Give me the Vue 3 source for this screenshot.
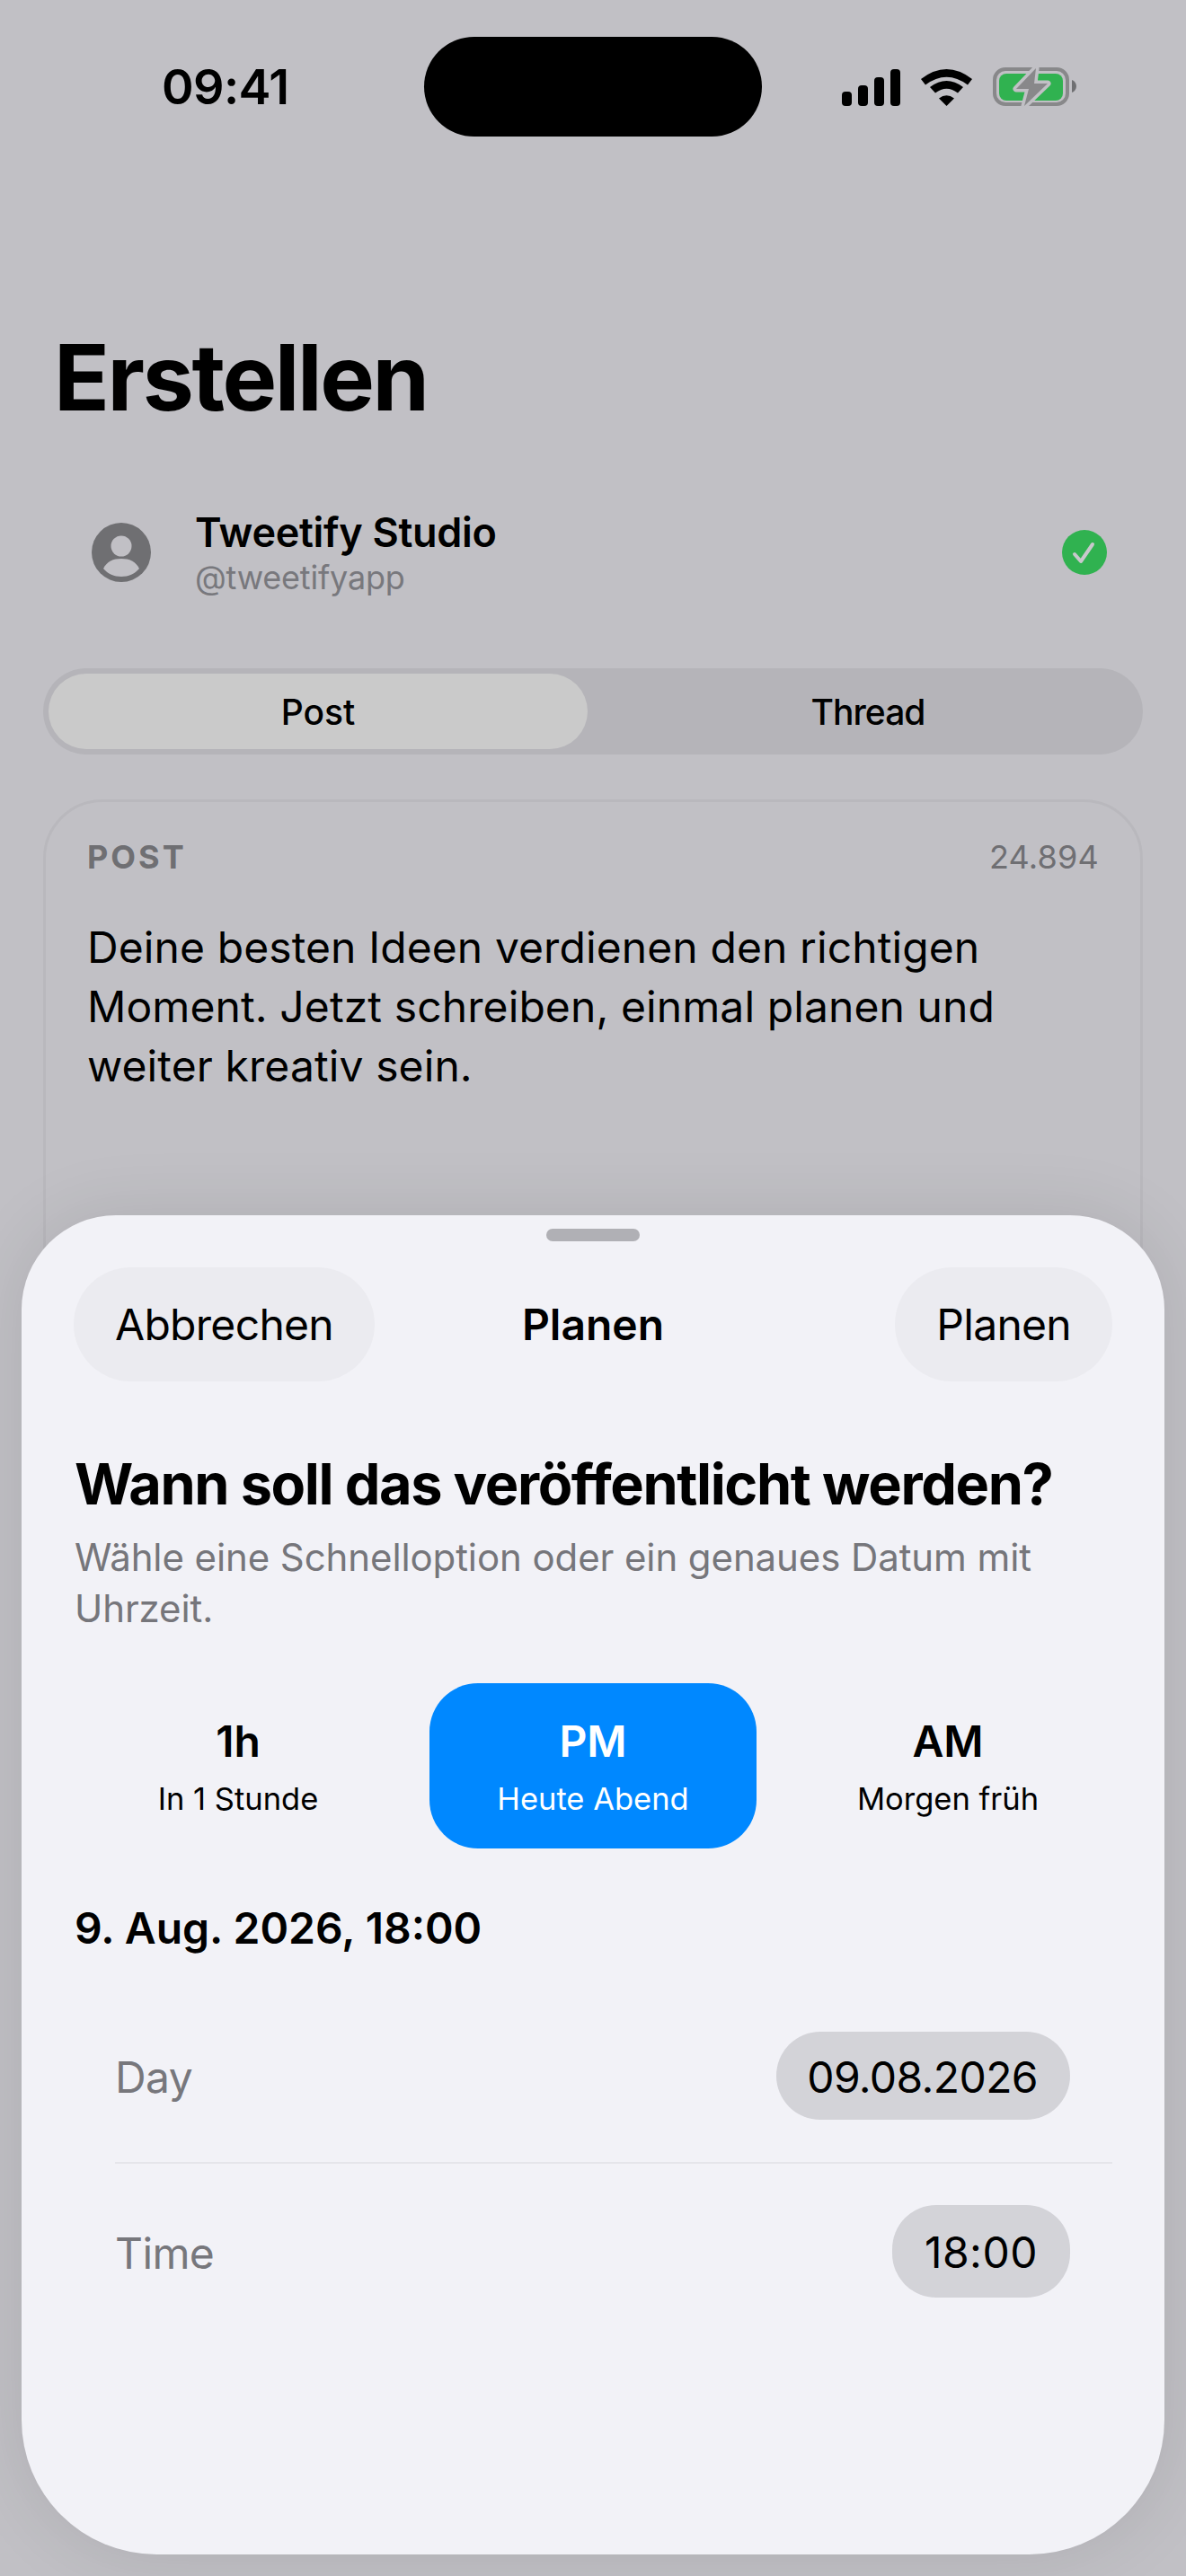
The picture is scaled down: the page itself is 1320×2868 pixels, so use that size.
<script setup>
const options = [
  { big: '1h', small: 'In 1 Stunde', on: false },
  { big: 'PM', small: 'Heute Abend', on: true },
  { big: 'AM', small: 'Morgen früh', on: false },
]
</script>

<template>
  <div class="screen">
    <header class="status">
      <span class="time">09:41</span>
      <div class="island"></div>
      <div class="status-icons">
        <svg width="65" height="41" viewBox="0 0 65 41"><rect x="0" y="25" width="11" height="16" rx="4" /><rect x="18" y="18" width="11" height="23" rx="4" /><rect x="36" y="9" width="11" height="32" rx="4" /><rect x="54" y="0" width="11" height="41" rx="4" /></svg>
        <svg width="57" height="42" viewBox="0 0 57 42"><path d="M0 12 Q28.500 -10 57 12 L52 18.500 Q28.500 1 5 18.500 Z" /><path d="M10 21 Q28.500 7 47 21 L41 27.500 Q28.500 18 16 27.500 Z" /><path d="M20 33.500 Q28.500 27 37 33.500 L28.500 42 Z" /></svg>
        <svg width="93" height="44" viewBox="0 0 93 44"><rect x="2" y="2" width="81" height="39" rx="12" fill="none" stroke="#88888a" stroke-width="4" /><path d="M88 14 C91 15 93 18 93 21 C93 24 91 27 88 28 Z" fill="#6f6f72" /><rect x="7" y="7" width="71" height="30" rx="8" fill="#30b250" /><path d="M48 1 L26 24 L40 24 L35 43 L61 18 L46 18 Z" fill="#88888a" stroke="#c1c0c5" stroke-width="7" stroke-linejoin="round" paint-order="stroke" /></svg>
      </div>
    </header>

    <h1 class="page-title">Erstellen</h1>

    <div class="account">
      <svg class="avatar" width="66" height="66" viewBox="0 0 66 66"><circle cx="33" cy="33" r="33" fill="#6f6f72" /><circle cx="33" cy="26" r="11.500" fill="#c1c0c5" /><path d="M13 51 C17 43 24 40 33 40 C42 40 49 43 53 51 C48 57 41 60 33 60 C25 60 18 57 13 51 Z" fill="#c1c0c5" /></svg>
      <div class="account-text">
        <div class="account-name">Tweetify Studio</div>
        <div class="account-handle">@tweetifyapp</div>
      </div>
      <svg class="check" width="50" height="50" viewBox="0 0 50 50"><circle cx="25" cy="25" r="25" fill="#30b250" /><path d="M14 27 L21 35 L34 16" fill="none" stroke="#c8c8cc" stroke-width="4" stroke-linecap="round" stroke-linejoin="round" /></svg>
    </div>

    <div class="segment">
      <div class="seg seg-on">Post</div>
      <div class="seg seg-off">Thread</div>
    </div>

    <section class="card">
      <div class="card-head">
        <span class="card-label">POST</span>
        <span class="card-count">24.894</span>
      </div>
      <p class="card-text">Deine besten Ideen verdienen den richtigen Moment. Jetzt schreiben, einmal planen und weiter kreativ sein.</p>
    </section>

    <section class="sheet">
      <div class="grabber"></div>
      <div class="sheet-bar">
        <div class="pill-btn">Abbrechen</div>
        <div class="sheet-title">Planen</div>
        <div class="pill-btn">Planen</div>
      </div>
      <h2 class="question">Wann soll das veröffentlicht werden?</h2>
      <p class="hint">Wähle eine Schnelloption oder ein genaues Datum mit Uhrzeit.</p>
      <div class="options">
        <div v-for="o in options" :key="o.big" class="option" :class="{ 'option-on': o.on }">
          <div class="option-big">{{ o.big }}</div>
          <div class="option-small">{{ o.small }}</div>
        </div>
      </div>
      <div class="picked">9. Aug. 2026, 18:00</div>
      <div class="rows">
        <div class="row row-day">
          <span class="row-label">Day</span>
          <span class="row-value">09.08.2026</span>
        </div>
        <div class="row row-time">
          <span class="row-label">Time</span>
          <span class="row-value">18:00</span>
        </div>
      </div>
    </section>
  </div>
</template>

<style>
html, body { margin: 0; background: #c1c0c5; }
</style>

<style scoped>
.screen {
  position: relative;
  width: 1320px;
  height: 2868px;
  overflow: hidden;
  background: #c1c0c5;
  font-family: Inter, "Liberation Sans", sans-serif;
  color: #000;
}
.status {
  height: 194px;
  display: grid;
  grid-template-columns: 472px 376px 1fr;
  align-items: start;
}
.time {
  font-size: 54px;
  font-weight: 600;
  line-height: 66px;
  letter-spacing: -0.6px;
  padding: 64px 0 0 180px;
}
.island {
  margin-top: 41px;
  height: 111px;
  background: #000;
  border-radius: 56px;
}
.status-icons {
  margin-top: 75px;
  padding-left: 89px;
  display: flex;
  align-items: center;
  gap: 23px;
}
.page-title {
  margin: 168px 0 0 60px;
  font-size: 102px;
  font-weight: 700;
  line-height: 116px;
  letter-spacing: -2.4px;
}
.account {
  display: flex;
  align-items: center;
  margin-top: 87px;
  padding: 0 88px 0 102px;
  height: 100px;
}
.account-text { margin-left: 49px; flex: 1; padding-top: 5px; }
.account-name { font-size: 45px; font-weight: 600; line-height: 50px; letter-spacing: -0.3px; }
.account-handle { font-size: 36px; line-height: 50px; letter-spacing: -0.2px; color: #78787d; }
.segment {
  margin: 79px 48px 0;
  height: 96px;
  box-sizing: border-box;
  padding: 6px 0 6px 6px;
  border-radius: 48px;
  background: #b5b4b9;
  display: grid;
  grid-template-columns: 600px 1fr;
  font-size: 39px;
  font-weight: 500;
}
.seg { display: flex; align-items: center; justify-content: center; border-radius: 42px; }
.seg-on { background: #cacaca; }
.seg-off { padding-left: 6px; letter-spacing: -1px; }
.card {
  margin: 50px 48px 0;
  height: 640px;
  box-sizing: border-box;
  border: 3px solid #b9b8bd;
  border-radius: 66px;
  padding: 41px 46px;
}
.card-head { display: flex; justify-content: space-between; align-items: center; line-height: 40px; }
.card-label { font-size: 36px; font-weight: 700; letter-spacing: 3px; color: #6f6f73; }
.card-count { font-size: 36px; letter-spacing: 0.2px; color: #6f6f73; }
.card-text { margin: 48px 0 0; font-size: 48px; line-height: 66px; letter-spacing: 0.1px; }
.sheet {
  position: absolute;
  left: 24px;
  top: 1353px;
  width: 1272px;
  height: 1491px;
  box-sizing: border-box;
  background: #f2f2f7;
  border-radius: 105px 105px 150px 150px;
  box-shadow: 0 0 80px rgba(0, 0, 0, 0.1);
  padding: 15px 58px 0 58px;
}
.grabber { width: 104px; height: 14px; border-radius: 7px; background: #b0b0b5; margin: 0 auto; }
.sheet-bar {
  margin-top: 29px;
  display: flex;
  align-items: center;
  justify-content: space-between;
  position: relative;
  font-size: 48px;
}
.pill-btn {
  height: 127px;
  padding: 0 46px;
  border-radius: 64px;
  background: #ebebf0;
  display: flex;
  align-items: center;
  letter-spacing: -0.7px;
}
.sheet-title {
  position: absolute;
  left: 0;
  right: 0;
  text-align: center;
  font-weight: 600;
}
.question { margin: 72px 0 0 1px; font-size: 63px; font-weight: 700; line-height: 84px; letter-spacing: -1.4px; }
.hint { margin: 11px 0 0 1px; font-size: 42px; line-height: 57px; letter-spacing: -0.1px; color: #76767b; width: 1140px; }
.options {
  margin: 55px 0 0 1px;
  display: grid;
  grid-template-columns: 364px 364px 364px;
  gap: 31px;
}
.option {
  height: 184px;
  box-sizing: border-box;
  padding-top: 4px;
  border-radius: 54px;
  display: flex;
  flex-direction: column;
  align-items: center;
  justify-content: center;
  gap: 12px;
}
.option-on { background: #0088ff; color: #fff; }
.option-big { font-size: 48px; font-weight: 600; line-height: 58px; }
.option-small { font-size: 34.5px; line-height: 46px; }
.picked { margin: 58px 0 0 1px; font-size: 48px; font-weight: 600; line-height: 62px; }
.rows { margin: 0 0 0 46px; }
.row {
  display: flex;
  align-items: center;
  justify-content: space-between;
  padding-right: 47px;
}
.row-day { margin-top: 36px; height: 193px; border-bottom: 2px solid #e5e5ea; }
.row-time { height: 195px; }
.row-label { font-size: 48px; letter-spacing: -0.6px; color: #77777c; padding-top: 3px; }
.row-value {
  font-size: 48px;
  border-radius: 49px;
  background: #d3d3d8;
}
.row-day .row-value { padding: 0 36px 0 34px; height: 98px; line-height: 101px; letter-spacing: -0.6px; }
.row-time .row-value { padding: 0 36px; height: 103px; line-height: 106px; letter-spacing: 0.5px; }
</style>
